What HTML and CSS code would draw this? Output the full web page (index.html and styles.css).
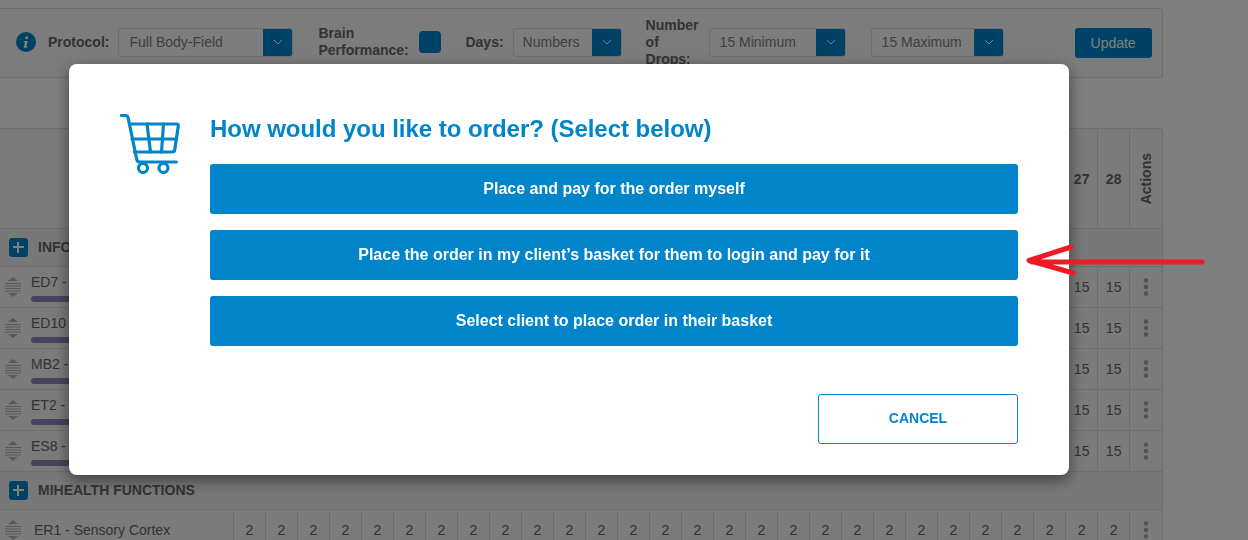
FILE: index.html
```html
<!DOCTYPE html>
<html lang="en">
<head>
    <meta charset="UTF-8">
    <title>Order</title>
    <link rel="stylesheet" href="styles.css">
</head>
<body>
    <svg class="defs" width="0" height="0">
        <symbol id="drag" viewBox="0 0 16 20">
            <path d="M8 0l5 4H3z" fill="currentColor"/>
            <path d="M0 6.500h16M0 9h16M0 11.500h16M0 14h16" stroke="currentColor" stroke-width="1" fill="none"/>
            <path d="M8 20l-5-4h10z" fill="currentColor"/>
        </symbol>
        <symbol id="dots" viewBox="0 0 6 18">
            <circle cx="3" cy="2.500" r="2.300" fill="currentColor"/>
            <circle cx="3" cy="9" r="2.300" fill="currentColor"/>
            <circle cx="3" cy="15.500" r="2.300" fill="currentColor"/>
        </symbol>
        <symbol id="caret" viewBox="0 0 10 6">
            <path d="M1 1l4 4 4-4" stroke="currentColor" stroke-width="1" fill="none"/>
        </symbol>
    </svg>

    <div class="toolbar">
        <svg class="info" width="20" height="20" viewBox="0 0 20 20">
            <circle cx="10" cy="10" r="10" fill="#0085ca"/>
            <path d="M10.800 4.200a1.500 1.500 0 1 1-.1 3 1.500 1.500 0 0 1 .1-3zM7.800 9h3.900l-1.300 5.500h1.300l-.3 1.300H7.700l1.300-5.600H7.500z" fill="#fff"/>
        </svg>
        <span class="lbl lbl-protocol">Protocol:</span>
        <div class="drop drop-protocol">
            <span>Full Body-Field</span>
            <i><svg width="10" height="6"><use href="#caret"/></svg></i>
        </div>
        <span class="lbl lbl-brain">Brain Performance:</span>
        <span class="check"></span>
        <span class="lbl lbl-days">Days:</span>
        <div class="drop drop-days">
            <span>Numbers</span>
            <i><svg width="10" height="6"><use href="#caret"/></svg></i>
        </div>
        <span class="lbl lbl-drops">Number of Drops:</span>
        <div class="drop drop-min">
            <span>15 Minimum</span>
            <i><svg width="10" height="6"><use href="#caret"/></svg></i>
        </div>
        <div class="drop drop-max">
            <span>15 Maximum</span>
            <i><svg width="10" height="6"><use href="#caret"/></svg></i>
        </div>
        <button class="update">Update</button>
    </div>

    <table class="grid">
        <colgroup>
            <col class="col-name">
            <col span="28" class="col-day">
            <col class="col-actions">
        </colgroup>
        <thead>
            <tr>
                <th colspan="27"></th>
                <th>27</th><th>28</th>
                <th><span class="vert">Actions</span></th>
            </tr>
        </thead>
        <tbody>
            <tr class="section">
                <td colspan="30"><div class="section-in"><span class="plus"></span>INFO</div></td>
            </tr>
            <tr>
                <td class="name"><svg class="drag" width="16" height="20"><use href="#drag"/></svg><div class="name-in">ED7 -<span class="bar"></span></div></td>
                <td colspan="26"></td>
                <td>15</td><td>15</td>
                <td><svg class="dots" width="6" height="18"><use href="#dots"/></svg></td>
            </tr>
            <tr>
                <td class="name"><svg class="drag" width="16" height="20"><use href="#drag"/></svg><div class="name-in">ED10<span class="bar"></span></div></td>
                <td colspan="26"></td>
                <td>15</td><td>15</td>
                <td><svg class="dots" width="6" height="18"><use href="#dots"/></svg></td>
            </tr>
            <tr>
                <td class="name"><svg class="drag" width="16" height="20"><use href="#drag"/></svg><div class="name-in">MB2 -<span class="bar"></span></div></td>
                <td colspan="26"></td>
                <td>15</td><td>15</td>
                <td><svg class="dots" width="6" height="18"><use href="#dots"/></svg></td>
            </tr>
            <tr>
                <td class="name"><svg class="drag" width="16" height="20"><use href="#drag"/></svg><div class="name-in">ET2 -<span class="bar"></span></div></td>
                <td colspan="26"></td>
                <td>15</td><td>15</td>
                <td><svg class="dots" width="6" height="18"><use href="#dots"/></svg></td>
            </tr>
            <tr>
                <td class="name"><svg class="drag" width="16" height="20"><use href="#drag"/></svg><div class="name-in">ES8 -<span class="bar"></span></div></td>
                <td colspan="26"></td>
                <td>15</td><td>15</td>
                <td><svg class="dots" width="6" height="18"><use href="#dots"/></svg></td>
            </tr>
            <tr class="section">
                <td colspan="30"><div class="section-in"><span class="plus"></span>MIHEALTH FUNCTIONS</div></td>
            </tr>
            <tr>
                <td class="name name-plain"><svg class="drag" width="16" height="20"><use href="#drag"/></svg><div class="name-in">ER1 - Sensory Cortex</div></td>
                <td>2</td><td>2</td><td>2</td><td>2</td><td>2</td><td>2</td><td>2</td>
                <td>2</td><td>2</td><td>2</td><td>2</td><td>2</td><td>2</td><td>2</td>
                <td>2</td><td>2</td><td>2</td><td>2</td><td>2</td><td>2</td><td>2</td>
                <td>2</td><td>2</td><td>2</td><td>2</td><td>2</td><td>2</td><td>2</td>
                <td><svg class="dots" width="6" height="18"><use href="#dots"/></svg></td>
            </tr>
        </tbody>
    </table>

    <!-- Order dialog -->
    <div class="overlay">
        <div class="modal">
            <svg class="cart" width="60" height="60" viewBox="0 0 60 60" fill="none" stroke="#0085ca" stroke-width="3.200" stroke-linecap="round" stroke-linejoin="round">
                <path d="M1.500 1.500h4c1.500 0 2.300.8 2.600 2.300l8.700 41.700c.3 1.500 1.300 2.500 2.800 2.500h36.700"/>
                <path d="M9.500 10h47c1.300 0 2 .8 1.800 2l-3.500 23.500c-.3 1.800-1.300 2.500-3 2.500H14.300"/>
                <path d="M12 25h44.500M27 10l3.500 28M43.500 10l-2 28"/>
                <circle cx="23" cy="54" r="4.500"/>
                <circle cx="43.500" cy="54" r="4.500"/>
            </svg>
            <div class="modal-main">
                <h2>How would you like to order? (Select below)</h2>
                <div class="choices">
                    <button class="choice">Place and pay for the order myself</button>
                    <button class="choice">Place the order in my client’s basket for them to login and pay for it</button>
                    <button class="choice">Select client to place order in their basket</button>
                </div>
                <div class="modal-foot">
                    <button class="cancel">CANCEL</button>
                </div>
            </div>
        </div>
        <svg class="arrow" width="190" height="40" viewBox="0 0 190 40" fill="none" stroke="#ed1c24" stroke-width="5" stroke-linecap="round" stroke-linejoin="round">
            <path d="M182 22H12M51 7L9 20.500 53 33"/>
        </svg>
    </div>
</body>
</html>
```

FILE: styles.css
```css
* {
    box-sizing: border-box;
}
html, body {
    height: 100%;
}
body {
    margin: 0;
    padding-top: 8px;
    overflow: hidden;
    background: #fff;
    color: #666;
    font-family: "Liberation Sans", Arial, sans-serif;
    font-size: 14px;
}
.defs {
    position: absolute;
}
.toolbar {
    display: flex;
    align-items: center;
    width: 1163px;
    height: 70px;
    padding: 0 0 2px 16px;
    background: #f9f9f9;
    border: 1px solid #ddd;
    border-left: 0;
    border-radius: 0 3px 3px 0;
}
.info {
    margin-right: 12px;
    flex: none;
}
.lbl {
    font-weight: bold;
    line-height: 17px;
}
.lbl-protocol {
    margin-right: 9px;
}
.lbl-brain {
    width: 90px;
    margin: 0 11px 0 25px;
}
.lbl-days {
    margin: 0 9px 0 24px;
}
.lbl-drops {
    width: 54px;
    margin: 0 9px 0 24px;
}
.drop {
    display: flex;
    justify-content: space-between;
    align-items: center;
    height: 29px;
    padding-left: 10px;
    background: #fafafa;
    border: 1px solid #ddd;
    border-radius: 3px;
    color: #808080;
    overflow: hidden;
}
.drop i {
    display: flex;
    align-items: center;
    justify-content: center;
    width: 30px;
    height: 29px;
    margin-right: -1px;
    background: #0085ca;
    color: #fff;
}
.drop-protocol {
    width: 175px;
}
.drop-days {
    width: 109px;
    padding-left: 9px;
}
.drop-min {
    width: 137px;
}
.drop-max {
    width: 133px;
    margin-left: 25px;
}
.check {
    width: 22px;
    height: 22px;
    background: #0085ca;
    border-radius: 4px;
}
.update {
    width: 77px;
    height: 30px;
    margin: 2px 0 0 71px;
    background: #0085ca;
    border: none;
    border-radius: 3px;
    color: #fff;
    font: 14px "Liberation Sans", Arial, sans-serif;
}

.grid {
    width: 1163px;
    margin-top: 50px;
    border-collapse: separate;
    border-spacing: 0;
    table-layout: fixed;
    background: #f6f6f6;
}
.col-name {
    width: 234px;
}
.col-day {
    width: 32px;
}
.col-actions {
    width: 33px;
}
.grid th, .grid td {
    padding: 0;
    border-right: 1px solid #ddd;
    border-bottom: 1px solid #ddd;
    text-align: center;
}
.grid th {
    height: 101px;
    border-top: 1px solid #ddd;
    font-weight: bold;
}
.grid th:last-child {
    border-top-right-radius: 4px;
}
.grid td {
    height: 41px;
}
.vert {
    display: inline-block;
    margin-top: 4px;
    writing-mode: vertical-rl;
    transform: rotate(180deg);
}
.section td {
    height: 38px;
    padding-bottom: 1px;
    background: #f0f0f0;
    text-align: left;
}
.section-in {
    display: flex;
    align-items: center;
    padding-left: 9px;
    font-weight: bold;
}
.plus {
    position: relative;
    width: 19px;
    height: 19px;
    margin-right: 10px;
    background: #0085ca;
    border-radius: 3px;
}
.plus::before, .plus::after {
    content: "";
    position: absolute;
    background: #fff;
}
.plus::before {
    left: 4px;
    top: 8px;
    width: 11px;
    height: 2px;
}
.plus::after {
    left: 8px;
    top: 4px;
    width: 2px;
    height: 11px;
}
.grid td.name {
    padding-left: 4px;
    text-align: left;
}
.name {
    position: relative;
}
.drag {
    position: absolute;
    left: 5px;
    top: 10px;
    color: #b4b4b4;
}
.name-in {
    padding: 2px 0 0 27px;
    line-height: 17px;
    white-space: nowrap;
}
.name-plain .name-in {
    padding: 0 0 0 30px;
}
.bar {
    display: block;
    width: 160px;
    height: 6px;
    margin-top: 5px;
    background: #9683bc;
    border-radius: 3px;
}
.dots {
    vertical-align: middle;
    color: #a6a6a6;
}

.overlay {
    position: fixed;
    top: 0;
    left: 0;
    width: 100%;
    height: 100%;
    background: rgba(0,0,0,0.5);
}
.modal {
    position: absolute;
    left: 69px;
    top: 64px;
    display: flex;
    gap: 30px;
    width: 1000px;
    height: 411px;
    padding: 50px 51px 0;
    background: #fff;
    border-radius: 8px;
    box-shadow: 0 5px 15px rgba(0,0,0,0.5);
}
.cart {
    flex: none;
}
.modal-main {
    flex: 1;
}
.modal-main h2 {
    margin: 0 0 20px;
    color: #0085ca;
    font-size: 24px;
    font-weight: bold;
    letter-spacing: -0.03px;
    line-height: 30px;
}
.choices {
    display: flex;
    flex-direction: column;
    gap: 16px;
}
.choice {
    height: 50px;
    background: #0085ca;
    border: none;
    border-radius: 3px;
    color: #fff;
    font: bold 16px "Liberation Sans", Arial, sans-serif;
}
.modal-foot {
    display: flex;
    justify-content: flex-end;
    margin-top: 48px;
}
.cancel {
    width: 200px;
    height: 50px;
    padding-bottom: 3px;
    background: #fff;
    border: 1px solid #0085ca;
    border-radius: 3px;
    color: #0085ca;
    font: bold 14px "Liberation Sans", Arial, sans-serif;
}
.arrow {
    position: absolute;
    left: 1020px;
    top: 240px;
}
```
